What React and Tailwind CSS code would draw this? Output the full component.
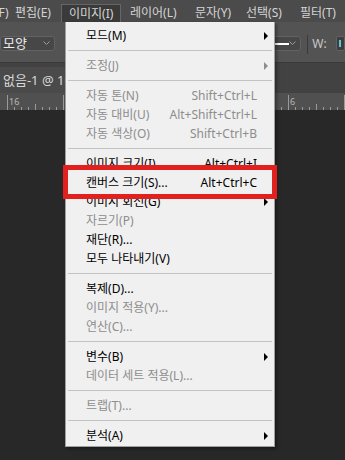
import React from "react";

const FONT = { fontFamily: '"Noto Sans", "Noto Sans CJK KR", sans-serif' };

const topMenus = [
  { label: "(F)", w: "w-[13px]", cls: "-ml-[5px] pl-0" },
  { label: "편집(E)", w: "w-[53px]", cls: "pl-[7px]" },
  { label: "이미지(I)", w: "w-[60px]", cls: "pl-[7px]", active: true },
  { label: "레이어(L)", w: "w-[67px]", cls: "pl-[9px]" },
  { label: "문자(Y)", w: "w-[51px]", cls: "pl-[7px]" },
  { label: "선택(S)", w: "w-[54px]", cls: "pl-[7px]" },
  { label: "필터(T)", w: "w-[47px]", cls: "pl-[7px]" },
];

const items = [
  { label: "모드(M)", arrow: true },
  "sep",
  { label: "조정(J)", arrow: true, disabled: true },
  "sep",
  { label: "자동 톤(N)", shortcut: "Shift+Ctrl+L", disabled: true },
  { label: "자동 대비(U)", shortcut: "Alt+Shift+Ctrl+L", disabled: true },
  { label: "자동 색상(O)", shortcut: "Shift+Ctrl+B", disabled: true },
  "sep",
  { label: "이미지 크기(I)...", shortcut: "Alt+Ctrl+I" },
  { label: "캔버스 크기(S)...", shortcut: "Alt+Ctrl+C" },
  { label: "이미지 회전(G)", arrow: true },
  { label: "자르기(P)", disabled: true },
  { label: "재단(R)..." },
  { label: "모두 나타내기(V)" },
  "sep",
  { label: "복제(D)..." },
  { label: "이미지 적용(Y)...", disabled: true },
  { label: "연산(C)...", disabled: true },
  "sep",
  { label: "변수(B)", arrow: true },
  { label: "데이터 세트 적용(L)...", disabled: true },
  "sep",
  { label: "트랩(T)...", disabled: true },
  "sep",
  { label: "분석(A)", arrow: true },
];

// only the labels that are not under the open menu
const rulerLabels = [
  { x: 7, n: "16" },
  { x: 288, n: "6" },
];

function Ruler() {
  const ticks = [];
  for (let i = -8; i < 60; i++) {
    const x = 7 + i * 7.03;
    if (x < 0 || x > 345) continue;
    const k = ((i % 8) + 8) % 8;
    const h = k === 0 ? 15 : k === 4 ? 6 : 3;
    ticks.push(
      <line key={i} x1={x} x2={x} y1={17 - h} y2={17} stroke="#9a9a9a" strokeWidth="1" shapeRendering="crispEdges" />
    );
  }
  return (
    <svg width="345" height="17" className="block">
      {ticks}
      {rulerLabels.map((m) => (
        <text key={m.x} x={m.x + 2} y={12} fontSize="9" fill="#b8b8b8" fontFamily="Noto Sans, sans-serif">
          {m.n}
        </text>
      ))}
    </svg>
  );
}

function MenuRow({ item }) {
  const color = item.disabled ? "text-[#8d8d8d]" : "text-black";
  return (
    <div className={`relative flex items-center h-[19px] pl-[20px] pr-[17px] text-[12px] leading-[19px] ${color}`}>
      <span className="flex-1 whitespace-nowrap">{item.label}</span>
      {item.shortcut && <span className="whitespace-nowrap">{item.shortcut}</span>}
      {item.arrow && (
        <span
          className={`absolute right-[6px] top-[6px] w-0 h-0 border-y-[4px] border-y-transparent border-l-[4px] ${
            item.disabled ? "border-l-[#8d8d8d]" : "border-l-black"
          }`}
        />
      )}
    </div>
  );
}

export default function App() {
  return (
    <div className="relative w-[345px] h-[460px] overflow-hidden bg-[#282828] flex flex-col" style={FONT}>
      {/* menu bar */}
      <div className="h-[22px] bg-[#4b4b4b] flex items-end text-[12px] text-[#d4d4d4] overflow-hidden">
        {topMenus.map((m) => (
          <div
            key={m.label}
            className={`shrink-0 h-[18px] leading-[17px] whitespace-nowrap ${m.w} ${m.cls} ${
              m.active ? "bg-[#3a3a3a] border border-b-0 border-[#666]" : ""
            }`}
          >
            {m.label}
          </div>
        ))}
      </div>

      {/* options bar */}
      <div className="h-[41px] bg-[#535353] border-b border-[#3a3a3a] flex items-start pt-[14px]">
        <div className="w-[61px] h-[15px] bg-[#474747] border border-[#626262] rounded-[3px] flex items-center justify-between pl-[2px] pr-[4px]">
          <span className="text-[13px] leading-[13px] text-[#ececec]">모양</span>
          <svg width="7" height="5" viewBox="0 0 7 5">
            <path d="M0.5 0.5 L3.5 3.5 L6.5 0.5" fill="none" stroke="#9c9c9c" strokeWidth="1" />
          </svg>
        </div>
        <div className="ml-[208px] w-[41px] h-[15px] bg-[#474747] border border-[#626262] rounded-[3px] flex items-center pl-[3px] pr-[4px]">
          <span className="w-[22px] h-[2px] bg-white" />
          <svg className="ml-auto" width="7" height="5" viewBox="0 0 7 5">
            <path d="M0.5 0.5 L3.5 3.5 L6.5 0.5" fill="none" stroke="#9c9c9c" strokeWidth="1" />
          </svg>
        </div>
        <div className="ml-[6px] -mt-[1px] w-px h-[19px] bg-[#3a3a3a]" />
        <span className="ml-[4px] text-[12px] leading-[15px] text-[#c8c8c8]">W:</span>
        <div className="ml-[9px] w-[10px] h-[15px] bg-[#3e3e3e] border border-[#626262] rounded-[2px] flex items-center pl-[2px]">
          <span className="w-[2px] h-[7px] bg-[#5ac8d8]" />
        </div>
      </div>

      {/* document tab row */}
      <div className="h-[30px] bg-[#424242] flex items-end">
        <div className="h-[26px] w-[200px] bg-[#4a4a4a] pl-[3px] pt-[2px] flex items-center text-[13px] text-[#d8d8d8] whitespace-nowrap overflow-hidden">
          없음-1 @ 100%(RGB/8)
        </div>
      </div>

      {/* ruler */}
      <div className="h-[17px] bg-[#505050]">
        <Ruler />
      </div>

      {/* canvas area */}
      <div className="flex-1 bg-[#282828]" />

      {/* dropdown menu */}
      <div className="absolute left-[65px] top-[22px] w-[210px] bg-[#f0f0f0] border border-t-0 border-[#a0a0a0] pt-[4px] pb-[1px] shadow-[2px_2px_3px_rgba(0,0,0,0.35)]">
        {items.map((it, i) =>
          it === "sep" ? (
            <div key={i} className="h-[11px] flex items-center px-[2px]">
              <div className="w-full h-px bg-[#c3c3c3]" />
            </div>
          ) : (
            <MenuRow key={i} item={it} />
          )
        )}
      </div>

      {/* highlight box */}
      <div className="absolute left-[63px] top-[165px] w-[214px] h-[34px] border-[5px] border-[#e2211f]" />
    </div>
  );
}
